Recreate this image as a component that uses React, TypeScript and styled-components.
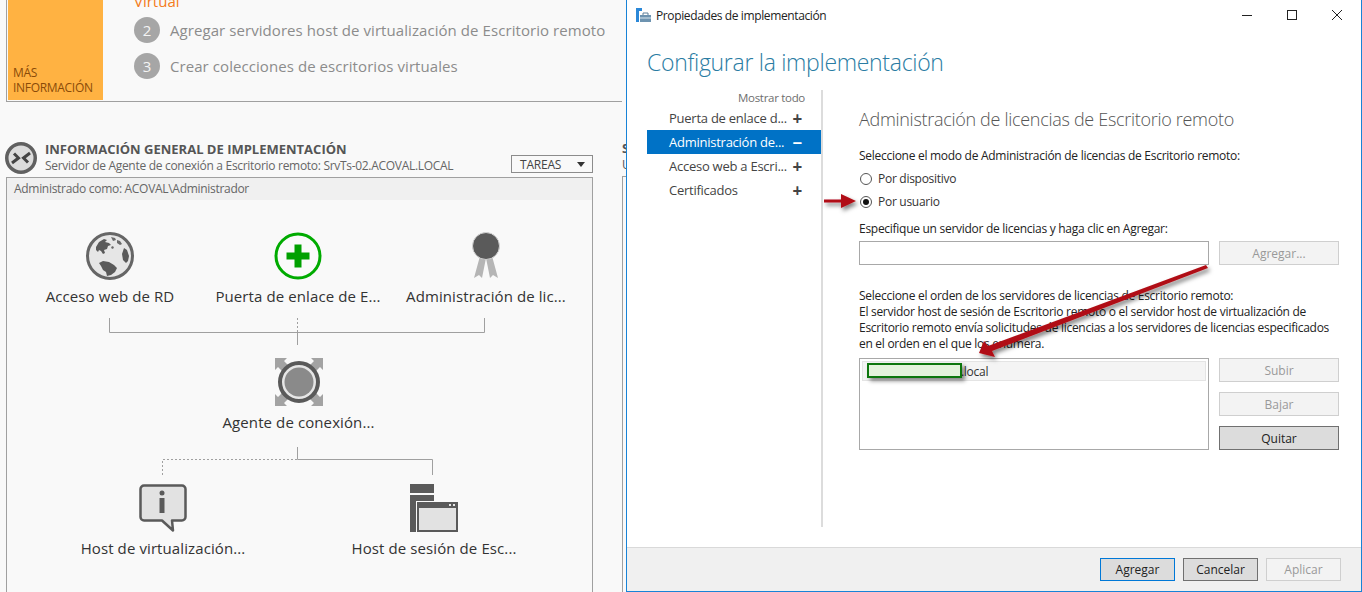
import React from 'react';
import styled, { createGlobalStyle } from 'styled-components';

const GlobalStyle = createGlobalStyle`
  html, body {
    margin: 0;
    padding: 0;
    height: 592px;
    overflow: hidden;
    background: #f9f9f9;
    font-family: "Open Sans", "Liberation Sans", sans-serif;
    color: #333;
  }
  * {
    box-sizing: border-box;
  }
`;

const Page = styled.div`
  display: flex;
  width: 1362px;
  height: 592px;
  overflow: hidden;
`;

const LeftPane = styled.div`
  display: flex;
  width: 626px;
  flex: none;
  overflow: hidden;
`;

const MainColumn = styled.div`
  width: 622px;
  flex: none;
  padding-left: 6px;
`;

const NextColumn = styled.div`
  flex: 1;
  padding-top: 139px;
  color: #555;
  font-size: 12px;
  line-height: 16px;
  white-space: nowrap;
`;

const NextTitle = styled.div`
  font-size: 13px;
  font-weight: 700;
  line-height: 18px;
  color: #555;
`;

const NextBox = styled.div`
  height: 420px;
  margin-top: 3px;
  border-top: 1px solid #a0a0a0;
  border-left: 1px solid #a0a0a0;
`;

const TopCard = styled.div`
  display: flex;
  height: 102px;
  padding-left: 1px;
  border-left: 1px solid #a0a0a0;
  border-bottom: 1px solid #a0a0a0;
`;

const InfoTile = styled.div`
  display: flex;
  align-items: flex-end;
  width: 95px;
  height: 100px;
  padding: 0 4px 5px 5px;
  background: #ffb242;
  color: #8a4b08;
  font-size: 12px;
  letter-spacing: -0.3px;
  line-height: 15px;
`;

const Steps = styled.div`
  display: flex;
  flex-direction: column;
  padding-left: 31px;
  overflow: hidden;
`;

const ClippedStep = styled.div`
  height: 12px;
  margin-top: -9px;
  color: #f47b20;
  font-size: 15px;
  line-height: 20px;
`;

const Step = styled.div`
  display: flex;
  align-items: center;
  gap: 10px;
  height: 26px;
  margin-top: 10px;
  color: #8c8c8c;
  font-size: 15px;
  letter-spacing: 0.07px;
  white-space: nowrap;
`;

const FirstStep = styled(Step)`
  margin-top: 14px;
`;

const StepNumber = styled.span`
  display: flex;
  align-items: center;
  justify-content: center;
  width: 26px;
  height: 26px;
  border-radius: 50%;
  background: #a6a6a6;
  color: #f4f4f4;
  font-size: 15px;
`;

const OverviewHeader = styled.div`
  display: flex;
  align-items: flex-end;
  width: 588px;
  height: 35px;
  margin: 37px 0 0 -1px;
`;

const OverviewIcon = styled.svg`
  width: 32px;
  height: 32px;
  flex: none;
`;

const OverviewText = styled.div`
  flex: 1;
  padding-left: 8px;
`;

const OverviewTitle = styled.div`
  color: #555;
  font-size: 13px;
  font-weight: 700;
  line-height: 17px;
  white-space: nowrap;
`;

const OverviewSubtitle = styled.div`
  color: #666;
  font-size: 12px;
  letter-spacing: -0.3px;
  line-height: 16px;
  white-space: nowrap;
`;

const TasksButton = styled.div`
  display: flex;
  align-items: center;
  justify-content: space-between;
  width: 82px;
  height: 18px;
  margin-bottom: 1px;
  padding: 0 7px 0 8px;
  border: 1px solid #8c8c8c;
  color: #444;
  font-size: 12px;
  letter-spacing: -0.2px;
`;

const TasksCaret = styled.span`
  width: 0;
  height: 0;
  border-left: 4px solid transparent;
  border-right: 4px solid transparent;
  border-top: 5px solid #333;
`;

const OverviewPanel = styled.div`
  width: 587px;
  height: 420px;
  margin-top: 3px;
  border: 1px solid #a0a0a0;
`;

const PanelBar = styled.div`
  height: 22px;
  padding-left: 7px;
  background: #f0f0f0;
  color: #666;
  font-size: 12px;
  letter-spacing: -0.3px;
  line-height: 22px;
`;

const TopNodes = styled.div`
  display: grid;
  grid-template-columns: repeat(3, 188px);
  padding: 32px 0 0 9px;
`;

const MiddleNode = styled.div`
  display: flex;
  justify-content: center;
  margin-top: 13px;
  padding-right: 2px;
`;

const BottomNodes = styled.div`
  display: grid;
  grid-template-columns: 270px 272px;
  margin-top: 9px;
  padding-left: 21px;
`;

const Node = styled.div`
  display: flex;
  flex-direction: column;
  align-items: center;
`;

const NodeIcon = styled.svg`
  width: 48px;
  height: 48px;
`;

const NodeLabel = styled.div`
  margin-top: 6px;
  color: #333;
  font-size: 15px;
  letter-spacing: 0.1px;
  line-height: 20px;
  white-space: nowrap;
`;

const Connector = styled.svg<{ $top: number }>`
  display: block;
  margin-top: ${(p) => p.$top}px;
`;

const Dialog = styled.div`
  position: relative;
  display: flex;
  flex-direction: column;
  flex: 1;
  height: 592px;
  background: #fff;
  border: 1px solid #1883d7;
  border-top: 0;
`;

const TitleBar = styled.div`
  display: flex;
  align-items: center;
  height: 30px;
  padding: 0 2px 0 9px;
  color: #222;
  font-size: 12px;
  letter-spacing: -0.38px;
`;

const TitleIcon = styled.svg`
  width: 15px;
  height: 15px;
  margin-right: 5px;
`;

const TitleText = styled.div`
  flex: 1;
`;

const WindowControl = styled.svg`
  width: 45px;
  height: 30px;
`;

const DialogHeading = styled.h1`
  margin: 16px 0 0 20px;
  color: #2a7ca3;
  font-size: 23px;
  font-weight: 300;
  letter-spacing: -0.3px;
  line-height: 32px;
`;

const DialogBody = styled.div`
  display: flex;
  flex: 1;
  margin-top: 12px;
`;

const SideNav = styled.div`
  width: 176px;
  height: 437px;
  margin-left: 20px;
  border-right: 2px solid #dcdcdc;
  flex: none;
`;

const ShowAll = styled.div`
  padding-right: 16px;
  color: #6e6e6e;
  font-size: 11.500px;
  letter-spacing: -0.3px;
  line-height: 16px;
  text-align: right;
`;

const NavItem = styled.div<{ $active?: boolean }>`
  display: flex;
  align-items: center;
  justify-content: space-between;
  height: 24px;
  padding: 0 19px 0 22px;
  background: ${(p) => (p.$active ? '#0072c6' : 'transparent')};
  color: ${(p) => (p.$active ? '#fff' : '#444')};
  font-size: 13px;
  letter-spacing: -0.25px;
  white-space: nowrap;
`;

const NavSign = styled.span`
  font-size: 17px;
  font-weight: 700;
  line-height: 1;
`;

const Content = styled.div`
  flex: 1;
  padding: 17px 0 0 36px;
  color: #222;
  font-size: 12px;
  letter-spacing: -0.28px;
`;

const ContentHeading = styled.h2`
  margin: 0;
  color: #555;
  font-size: 18px;
  font-weight: 300;
  letter-spacing: -0.3px;
  line-height: 24px;
  white-space: nowrap;
`;

const TextLine = styled.div<{ $top: number }>`
  margin-top: ${(p) => p.$top}px;
  line-height: 15.700px;
  white-space: nowrap;
`;

const RadioRow = styled.div<{ $top: number }>`
  display: flex;
  align-items: center;
  gap: 6px;
  height: 18px;
  margin-top: ${(p) => p.$top}px;
  padding-left: 1px;
  color: #333;
`;

const Radio = styled.span<{ $checked?: boolean }>`
  display: flex;
  align-items: center;
  justify-content: center;
  width: 12px;
  height: 12px;
  border: 1px solid #555;
  border-radius: 50%;
  &::after {
    content: '';
    display: ${(p) => (p.$checked ? 'block' : 'none')};
    width: 6px;
    height: 6px;
    border-radius: 50%;
    background: #111;
  }
`;

const InputRow = styled.div`
  display: flex;
  gap: 10px;
  margin-top: 5px;
`;

const Field = styled.div`
  width: 350px;
  height: 24px;
  border: 1px solid #a8a8a8;
  background: #fff;
`;

const DialogButton = styled.div<{ $variant?: 'disabled' | 'normal' | 'focus' }>`
  display: flex;
  align-items: center;
  justify-content: center;
  width: 120px;
  height: 24px;
  flex: none;
  background: ${(p) => (p.$variant === 'disabled' ? '#f3f3f3' : '#dcdcdc')};
  border: 1px solid
    ${(p) =>
      p.$variant === 'disabled'
        ? '#cfcfcf'
        : p.$variant === 'focus'
          ? '#0078d7'
          : '#707070'};
  color: ${(p) => (p.$variant === 'disabled' ? '#999' : '#222')};
  font-size: 12px;
  letter-spacing: 0;
`;

const FooterButton = styled(DialogButton)`
  width: 75px;
  height: 23px;
`;

const ListRow = styled.div`
  display: flex;
  gap: 10px;
  margin-top: 7px;
`;

const ServerList = styled.div`
  position: relative;
  width: 350px;
  height: 92px;
  padding: 2px;
  border: 1px solid #a8a8a8;
`;

const ServerRow = styled.div`
  height: 20px;
  padding-left: 98px;
  background: #f4f4f4;
  border: 1px solid #e4e4e4;
  line-height: 19px;
  color: #333;
`;

const Redaction = styled.div`
  position: absolute;
  top: 4px;
  left: 7px;
  width: 95px;
  height: 15px;
  background: #e4f3dc;
  border: 2px solid #0d760d;
  box-shadow: 3px 3px 4px rgba(0, 0, 0, 0.45);
`;

const ListButtons = styled.div`
  display: flex;
  flex-direction: column;
  gap: 10px;
`;

const Footer = styled.div`
  display: flex;
  justify-content: flex-end;
  gap: 8px;
  height: 44px;
  padding: 10px 20px 0 0;
  background: #f0f0f0;
  border-top: 1px solid #d9d9d9;
`;

const Annotation = styled.svg`
  position: absolute;
  left: 0;
  top: 0;
  width: 735px;
  height: 591px;
  pointer-events: none;
`;

const GlobeIcon = () => (
  <NodeIcon viewBox="0 0 48 48">
    <circle cx="24" cy="24" r="22.500" fill="#e6e6e6" stroke="#666" strokeWidth="3" />
    <path d="M10 15l3-5 5-3 3 1-2 2 4 1 2 2-3 1-1 3-3 1 1 3-2 1-2-3-2-1-1 2-2-2z" fill="#5a5a5a" />
    <path d="M25 5l4 1 1 2-3 1zM31 8l3 1 2 3-2 1-3-2zM26 14l2 1-1 2-2-1z" fill="#6a6a6a" />
    <path d="M38 16l3 2 2 6-1 5-2 2-3-3-1-6z" fill="#5a5a5a" />
    <path d="M13 31l4-2 6 1 5 3 3 3-2 4-4 3-4 1-1-4-3-2-2-4z" fill="#5a5a5a" />
  </NodeIcon>
);

const GatewayIcon = () => (
  <NodeIcon viewBox="0 0 48 48">
    <circle cx="24" cy="24" r="22" fill="#fafafa" stroke="#00ab00" strokeWidth="3" />
    <path d="M20.500 12.500h7v8h8v7h-8v8h-7v-8h-8v-7h8z" fill="#00a000" />
  </NodeIcon>
);

const LicenseIcon = () => (
  <NodeIcon viewBox="0 0 48 48">
    <path d="M18 24l-6 22 5-3 3 3 4-20zM30 24l6 22-5-3-3 3-4-20z" fill="#b5b5b5" />
    <circle cx="24" cy="14" r="13.500" fill="#5a5a5a" stroke="#d4d4d4" />
  </NodeIcon>
);

const BrokerIcon = () => (
  <NodeIcon viewBox="0 0 48 48">
    <path d="M0 0h12l-3 3 6 6-6 6-6-6-3 3zM48 0v12l-3-3-6 6-6-6 6-6-3-3zM0 48V36l3 3 6-6 6 6-6 6 3 3zM48 48H36l3-3-6-6 6-6 6 6 3-3z" fill="#a3a3a3" />
    <circle cx="24" cy="24" r="19" fill="#e6e6e6" stroke="#5a5a5a" strokeWidth="4" />
    <circle cx="24" cy="24" r="14.500" fill="#8a8a8a" />
  </NodeIcon>
);

const VirtualizationIcon = () => (
  <NodeIcon viewBox="0 0 48 48">
    <path d="M5 1.500h38a3.500 3.500 0 0 1 3.500 3.500v28a3.500 3.500 0 0 1-3.500 3.500H33l1 10-11-10H5A3.500 3.500 0 0 1 1.500 33V5A3.500 3.500 0 0 1 5 1.500z" fill="#e2e2e2" stroke="#5a5a5a" strokeWidth="2.500" strokeLinejoin="round" />
    <circle cx="23" cy="9" r="2.500" fill="#5a5a5a" />
    <rect x="20.500" y="14" width="5" height="15" fill="#5a5a5a" />
  </NodeIcon>
);

const SessionIcon = () => (
  <NodeIcon viewBox="0 0 48 48">
    <path d="M0 0h24v9H0zM0 11h24v6H6v31H0z" fill="#5a5a5a" />
    <rect x="7" y="18" width="41" height="30" fill="#5a5a5a" />
    <rect x="9" y="24" width="37" height="22" fill="#e2e2e2" />
    <path d="M39 20h2v2h-2zM43 20h2v2h-2z" fill="#e8e8e8" />
  </NodeIcon>
);

export default function App() {
  return (
    <>
      <GlobalStyle />
      <Page>
        <LeftPane>
          <MainColumn>
            <TopCard>
              <InfoTile>MÁS INFORMACIÓN</InfoTile>
              <Steps>
                <ClippedStep>Virtual</ClippedStep>
                <FirstStep>
                  <StepNumber>2</StepNumber>
                  Agregar servidores host de virtualización de Escritorio remoto
                </FirstStep>
                <Step>
                  <StepNumber>3</StepNumber>
                  Crear colecciones de escritorios virtuales
                </Step>
              </Steps>
            </TopCard>

            <OverviewHeader>
              <OverviewIcon viewBox="0 0 32 32">
                <circle cx="16" cy="16" r="14.250" fill="#dcdcdc" stroke="#606060" strokeWidth="3.500" />
                <path d="M7 21l6.500-5L9 11.500M25 11l-6.500 5 4.500 4.500" fill="none" stroke="#444" strokeWidth="3" />
              </OverviewIcon>
              <OverviewText>
                <OverviewTitle>INFORMACIÓN GENERAL DE IMPLEMENTACIÓN</OverviewTitle>
                <OverviewSubtitle>
                  Servidor de Agente de conexión a Escritorio remoto: SrvTs-02.ACOVAL.LOCAL
                </OverviewSubtitle>
              </OverviewText>
              <TasksButton>
                TAREAS
                <TasksCaret />
              </TasksButton>
            </OverviewHeader>

            <OverviewPanel>
              <PanelBar>Administrado como: ACOVAL\Administrador</PanelBar>
              <TopNodes>
                <Node>
                  <GlobeIcon />
                  <NodeLabel>Acceso web de RD</NodeLabel>
                </Node>
                <Node>
                  <GatewayIcon />
                  <NodeLabel>Puerta de enlace de E...</NodeLabel>
                </Node>
                <Node>
                  <LicenseIcon />
                  <NodeLabel>Administración de lic...</NodeLabel>
                </Node>
              </TopNodes>
              <Connector $top={12} width="585" height="27" viewBox="0 0 585 27">
                <path d="M102.500 0v14.500H477.500V0M290.500 14.500V27" fill="none" stroke="#a0a0a0" />
                <path d="M290.500 0v14" fill="none" stroke="#a0a0a0" strokeDasharray="2 2" />
              </Connector>
              <MiddleNode>
                <Node>
                  <BrokerIcon />
                  <NodeLabel>Agente de conexión...</NodeLabel>
                </Node>
              </MiddleNode>
              <Connector $top={15} width="585" height="28" viewBox="0 0 585 28">
                <path d="M290.500 0v12.500H425.500V28" fill="none" stroke="#a0a0a0" />
                <path d="M290 12.500H155.500V28" fill="none" stroke="#a0a0a0" strokeDasharray="2 2" />
              </Connector>
              <BottomNodes>
                <Node>
                  <VirtualizationIcon />
                  <NodeLabel>Host de virtualización...</NodeLabel>
                </Node>
                <Node>
                  <SessionIcon />
                  <NodeLabel>Host de sesión de Esc...</NodeLabel>
                </Node>
              </BottomNodes>
            </OverviewPanel>
          </MainColumn>
          <NextColumn>
            <NextTitle>S</NextTitle>
            U
            <NextBox />
          </NextColumn>
        </LeftPane>

        <Dialog>
          <TitleBar>
            <TitleIcon viewBox="0 0 15 15">
              <path d="M0 0h6v3H0zM0 3h3v11H0z" fill="#2b88d8" />
              <path d="M4 7h11v7H4z" fill="#6d93b0" />
              <path d="M7 7V5h5v2" fill="none" stroke="#5d7f99" />
              <path d="M4 10h11" stroke="#dce8f0" />
            </TitleIcon>
            <TitleText>Propiedades de implementación</TitleText>
            <WindowControl viewBox="0 0 45 30">
              <path d="M18 15.500h10" stroke="#222" />
            </WindowControl>
            <WindowControl viewBox="0 0 45 30">
              <rect x="18.500" y="10.500" width="9" height="9" fill="none" stroke="#222" />
            </WindowControl>
            <WindowControl viewBox="0 0 45 30">
              <path d="M18 10l10 10M28 10L18 20" stroke="#222" />
            </WindowControl>
          </TitleBar>

          <DialogHeading>Configurar la implementación</DialogHeading>

          <DialogBody>
            <SideNav>
              <ShowAll>Mostrar todo</ShowAll>
              <NavItem>
                Puerta de enlace d...
                <NavSign>+</NavSign>
              </NavItem>
              <NavItem $active>
                Administración de...
                <NavSign>−</NavSign>
              </NavItem>
              <NavItem>
                Acceso web a Escri...
                <NavSign>+</NavSign>
              </NavItem>
              <NavItem>
                Certificados
                <NavSign>+</NavSign>
              </NavItem>
            </SideNav>

            <Content>
              <ContentHeading>Administración de licencias de Escritorio remoto</ContentHeading>
              <TextLine $top={17}>
                Seleccione el modo de Administración de licencias de Escritorio remoto:
              </TextLine>
              <RadioRow $top={6}>
                <Radio />
                Por dispositivo
              </RadioRow>
              <RadioRow $top={5}>
                <Radio $checked />
                Por usuario
              </RadioRow>
              <TextLine $top={10}>
                Especifique un servidor de licencias y haga clic en Agregar:
              </TextLine>
              <InputRow>
                <Field />
                <DialogButton $variant="disabled">Agregar...</DialogButton>
              </InputRow>
              <TextLine $top={23}>
                Seleccione el orden de los servidores de licencias de Escritorio remoto:
              </TextLine>
              <TextLine $top={0}>
                El servidor host de sesión de Escritorio remoto o el servidor host de virtualización de
              </TextLine>
              <TextLine $top={0}>
                Escritorio remoto envía solicitudes de licencias a los servidores de licencias especificados
              </TextLine>
              <TextLine $top={0}>en el orden en el que los enumera.</TextLine>
              <ListRow>
                <ServerList>
                  <ServerRow>.local</ServerRow>
                  <Redaction />
                </ServerList>
                <ListButtons>
                  <DialogButton $variant="disabled">Subir</DialogButton>
                  <DialogButton $variant="disabled">Bajar</DialogButton>
                  <DialogButton>Quitar</DialogButton>
                </ListButtons>
              </ListRow>
            </Content>
          </DialogBody>

          <Footer>
            <FooterButton $variant="focus">Agregar</FooterButton>
            <FooterButton>Cancelar</FooterButton>
            <FooterButton $variant="disabled">Aplicar</FooterButton>
          </Footer>

          <Annotation viewBox="0 0 735 591">
            <defs>
              <filter id="arrowShadow" x="-20%" y="-20%" width="150%" height="150%">
                <feDropShadow dx="2" dy="3" stdDeviation="2" floodColor="#000" floodOpacity="0.5" />
              </filter>
            </defs>
            <g filter="url(#arrowShadow)" fill="#b00d14">
              <path d="M197 199.500h17v-5.500l15 7-15 7v-5.500h-17z" />
              <path d="M579 265l2 3L365 351l3 6-16-4 5-12 4 5z" />
            </g>
          </Annotation>
        </Dialog>
      </Page>
    </>
  );
}
